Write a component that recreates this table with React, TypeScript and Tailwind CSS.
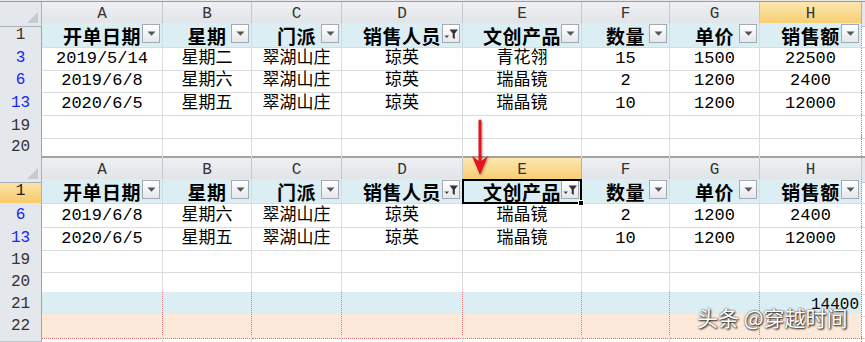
const GRID = "grid grid-cols-[42px_121px_89px_90px_121px_119px_88px_90px_102px_3px]";
const LETTERS = ["A", "B", "C", "D", "E", "F", "G", "H"];
const HEAD = ["开单日期", "星期", "门派", "销售人员", "文创产品", "数量", "单价", "销售额"];

const R3 = ["2019/5/14", "星期二", "翠湖山庄", "琼英", "青花翎", "15", "1500", "22500"];
const R6 = ["2019/6/8", "星期六", "翠湖山庄", "琼英", "瑞晶镜", "2", "1200", "2400"];
const R13 = ["2020/6/5", "星期五", "翠湖山庄", "琼英", "瑞晶镜", "10", "1200", "12000"];

type Row = {
  n: string;
  h: string;
  kind: "head" | "data" | "blank" | "blue" | "peach" | "partial";
  vals?: string[];
  blue?: boolean;
  redBottom?: boolean;
};

const TOP: Row[] = [
  { n: "1", h: "h-[23px]", kind: "head" },
  { n: "3", h: "h-[22px]", kind: "data", vals: R3, blue: true },
  { n: "6", h: "h-[23px]", kind: "data", vals: R6, blue: true },
  { n: "13", h: "h-[23px]", kind: "data", vals: R13, blue: true },
  { n: "19", h: "h-[21px]", kind: "blank" },
  { n: "20", h: "h-[21px]", kind: "blank" },
];

const BOTTOM: Row[] = [
  { n: "1", h: "h-[24px]", kind: "head" },
  { n: "6", h: "h-[23px]", kind: "data", vals: R6, blue: true },
  { n: "13", h: "h-[22px]", kind: "data", vals: R13, blue: true },
  { n: "19", h: "h-[22px]", kind: "blank" },
  { n: "20", h: "h-[22px]", kind: "blank", redBottom: true },
  { n: "21", h: "h-[22px]", kind: "blue" },
  { n: "22", h: "h-[22px]", kind: "peach" },
  { n: "", h: "h-[6px]", kind: "partial" },
];

function FilterBtn({ active }: { active?: boolean }) {
  return (
    <div className="absolute right-[2px] top-[1px] flex h-[19px] w-[18px] items-center justify-center border border-[#a4aab2] bg-linear-to-b from-white to-[#e4e7eb]">
      {active ? (
        <svg width="16" height="17" viewBox="0 0 16 17">
          <path d="M1.5 10.5H6L3.75 13Z" fill="#444" />
          <path d="M6.5 4.5H15L11.8 8.5V14L9.7 12.8V8.5Z" fill="#333" />
        </svg>
      ) : (
        <svg width="9" height="5" viewBox="0 0 9 5">
          <path d="M0.5 0.5H8.5L4.5 4.8Z" fill="#555" />
        </svg>
      )}
    </div>
  );
}

function ColHeader({ sel }: { sel: number }) {
  return (
    <div className={`${GRID} h-[21px] font-['Liberation_Mono',monospace] text-[16px] text-[#333]`}>
      <div className="relative border-r border-b border-[#a9b0b8] bg-[#e4e7eb]">
        <svg className="absolute right-[3px] bottom-[3px]" width="11" height="11" viewBox="0 0 11 11">
          <path d="M11 0V11H0Z" fill="#c6cbd1" />
        </svg>
      </div>
      {LETTERS.map((l, i) => (
        <div
          key={l}
          className={
            i === sel
              ? "flex items-center justify-center border-r border-b border-[#e9a84a] bg-linear-to-b from-[#fce7ae] to-[#f6cb6a]"
              : "flex items-center justify-center border-r border-b border-[#c3c8ce] bg-linear-to-b from-[#eef0f3] to-[#e0e3e7]"
          }
        >
          {l}
        </div>
      ))}
      <div className="border-b border-[#c3c8ce] bg-[#e4e7eb]" />
    </div>
  );
}

function SheetRow({ row, filters, selCol, selRowHead }: { row: Row; filters: number[]; selCol?: number; selRowHead?: boolean }) {
  const rh =
    row.kind === "head" && selRowHead
      ? "flex items-center justify-center border-r border-b border-[#e9a84a] bg-linear-to-b from-[#fce7ae] to-[#f6cb6a] text-[#222]"
      : row.blue
        ? "flex items-center justify-center border-r border-b border-r-[#9da5ae] border-b-[#c3c8ce] bg-[#e4e7eb] text-[#1428f0]"
        : "flex items-center justify-center border-r border-b border-r-[#9da5ae] border-b-[#c3c8ce] bg-[#e4e7eb] text-[#333]";

  let cellBase = "flex items-center justify-center border-r border-b border-[#dadcdd]";
  if (row.kind === "head") cellBase = "relative flex items-center justify-center border-r border-b border-[#cfe0e5] bg-[#daeef3]";
  if (row.kind === "blue") cellBase = "flex items-center justify-end border-r border-b border-dotted border-[#d97a7a] bg-[#daeef3]";
  if (row.kind === "peach") cellBase = "flex items-center border-r border-b border-dotted border-[#d97a7a] bg-[#fde9d9]";
  if (row.kind === "partial") cellBase = "border-r border-[#dadcdd]";
  if (row.redBottom) cellBase = "border-r border-b border-[#dadcdd] border-b-[#d97a7a] [border-bottom-style:dotted]";

  return (
    <div className={`${GRID} ${row.h}`}>
      <div className={`${rh} font-['Liberation_Mono',monospace] text-[16px]`}>{row.n}</div>
      {LETTERS.map((l, i) => {
        const edge = i === 7 && row.kind !== "blue" && row.kind !== "peach" ? " border-r-[#d97a7a] [border-right-style:dotted]" : "";
        return (
          <div key={l} className={cellBase + edge + (row.kind === "head" && i === selCol ? " z-10" : "")}>
            {row.kind === "head" && (
              <>
                <span className="font-['Noto_Sans_CJK_SC',sans-serif] text-[19px] leading-none font-bold tracking-[0.5px] text-black">{HEAD[i]}</span>
                <FilterBtn active={filters.includes(i)} />
                {i === selCol && (
                  <div className="absolute -left-[1px] top-0 -right-[1px] -bottom-[1px] border-2 border-black">
                    <div className="absolute -right-[4px] -bottom-[4px] h-[6px] w-[6px] border border-white bg-black" />
                  </div>
                )}
              </>
            )}
            {row.kind === "data" && (
              <span className="font-['Liberation_Mono','Noto_Sans_CJK_SC',monospace] text-[17px] leading-none text-black">{row.vals![i]}</span>
            )}
            {row.kind === "blue" && i === 7 && (
              <span className="pr-[2px] pt-[1px] font-['Liberation_Mono',monospace] text-[16px] leading-none text-black">14400</span>
            )}
          </div>
        );
      })}
      <div className={row.kind === "partial" ? "" : "border-b border-[#dadcdd]"} />
    </div>
  );
}

export default function App() {
  return (
    <div className="relative h-[342px] w-[865px] overflow-hidden bg-white">
      <div className="h-[1px] bg-[#e8e8e8]" />
      <div className="h-[1px] bg-[#9d9d9d]" />
      <ColHeader sel={7} />
      {TOP.map((r) => (
        <SheetRow key={"t" + r.n} row={r} filters={[3]} />
      ))}
      <div className="h-[2px] bg-[#a3a3a3]" />
      <ColHeader sel={4} />
      {BOTTOM.map((r) => (
        <SheetRow key={"b" + r.n} row={r} filters={[3, 4]} selCol={4} selRowHead />
      ))}

      {/* red arrow pointing at E header */}
      <svg className="absolute left-[468px] top-[116px] drop-shadow-[1px_1px_1px_rgba(0,0,0,0.35)]" width="26" height="64" viewBox="0 0 26 64">
        <line x1="12" y1="5" x2="12" y2="50" stroke="#e3141c" strokeWidth="3" strokeLinecap="round" />
        <path d="M4 40L12 59L20 40L12 46Z" fill="#e3141c" />
      </svg>

      <div className="absolute left-[697px] top-[307px] font-['Noto_Sans_CJK_SC',sans-serif] text-[21px] leading-none whitespace-nowrap text-white [text-shadow:1px_1px_2px_rgba(0,0,0,0.9),0_0_2px_rgba(0,0,0,0.7)]">
        头条 @穿越时间
      </div>
    </div>
  );
}
